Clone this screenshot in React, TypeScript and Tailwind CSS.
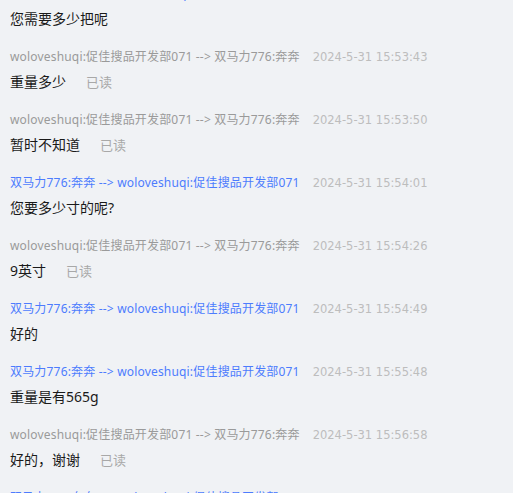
import React from "react";

type Item = { blue: boolean; time: string; msg: string; read?: boolean };

const A = "woloveshuqi:促佳搜品开发部071 --> 双马力776:奔奔";
const B = "双马力776:奔奔 --> woloveshuqi:促佳搜品开发部071";

const items: Item[] = [
  { blue: true, time: "2024-5-31 15:53:30", msg: "您需要多少把呢" },
  { blue: false, time: "2024-5-31 15:53:43", msg: "重量多少", read: true },
  { blue: false, time: "2024-5-31 15:53:50", msg: "暂时不知道", read: true },
  { blue: true, time: "2024-5-31 15:54:01", msg: "您要多少寸的呢?" },
  { blue: false, time: "2024-5-31 15:54:26", msg: "9英寸", read: true },
  { blue: true, time: "2024-5-31 15:54:49", msg: "好的" },
  { blue: true, time: "2024-5-31 15:55:48", msg: "重量是有565g" },
  { blue: false, time: "2024-5-31 15:56:58", msg: "好的，谢谢", read: true },
  { blue: true, time: "2024-5-31 15:58:20", msg: "好的" },
];

export default function App() {
  return (
    <div
      className="h-[493px] w-[513px] overflow-hidden bg-[#f0f2f5]"
      style={{ fontFamily: '"Noto Sans", "Noto Sans CJK SC", sans-serif' }}
    >
      <div className="mt-[-16px] pl-[10px]">
        {items.map((it, i) => (
          <div key={i} className="pb-[18px]">
            <div className="flex h-[20px] items-center whitespace-nowrap text-[12px] leading-[20px]">
              <span
                className={
                  "tracking-[0.18px] " + (it.blue ? "text-[#4d7cfe]" : "text-[#9a9a9a]")
                }
              >
                {it.blue ? B : A}
              </span>
              <span className="ml-[13px] font-['DejaVu_Sans'] text-[11.5px] text-[#bdbdbd]">
                {it.time}
              </span>
            </div>
            <div className="mt-[5px] flex h-[20px] items-center text-[14px] leading-[20px] text-[#1a1a1a]">
              <span>{it.msg}</span>
              {it.read && <span className="ml-[20px] text-[13px] text-[#a8a8a8]">已读</span>}
            </div>
          </div>
        ))}
      </div>
    </div>
  );
}
